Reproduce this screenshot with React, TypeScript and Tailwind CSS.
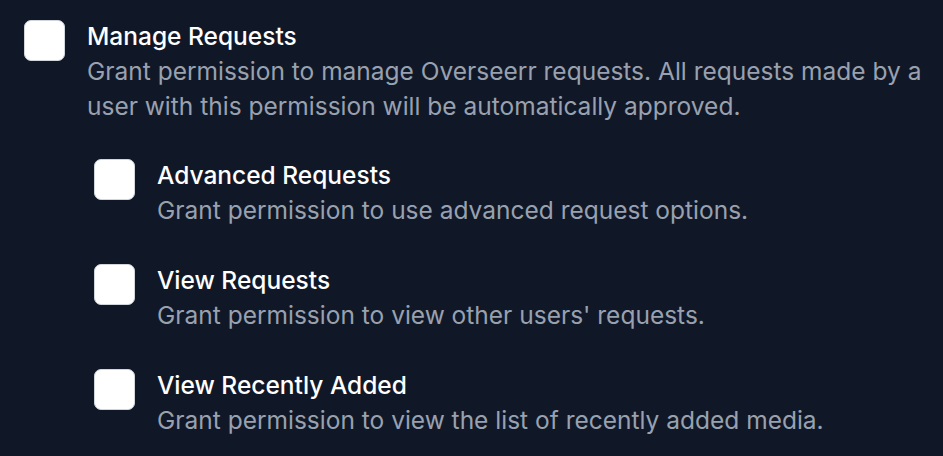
const items = [
  {
    title: "Advanced Requests",
    desc: "Grant permission to use advanced request options.",
  },
  {
    title: "View Requests",
    desc: "Grant permission to view other users' requests.",
  },
  {
    title: "View Recently Added",
    desc: "Grant permission to view the list of recently added media.",
  },
];

const Permission = ({ title, desc }: { title: string; desc: string }) => (
  <div className="flex items-start">
    <span className="mt-[1px] h-[41px] w-[41px] shrink-0 rounded-[7px] border border-gray-300 bg-white" />
    <div className="ml-[22px]">
      <div className="font-medium text-white">{title}</div>
      <div className="text-gray-400">{desc}</div>
    </div>
  </div>
);

const App = () => {
  return (
    <div
      className="h-[456px] w-[943px] overflow-hidden bg-gray-900 pl-6 pr-2 pt-[19px] text-[24.5px] leading-[35px]"
      style={{ fontFamily: "Inter, sans-serif" }}
    >
      <Permission
        title="Manage Requests"
        desc="Grant permission to manage Overseerr requests. All requests made by a user with this permission will be automatically approved."
      />
      <div className="ml-[70px] mt-[34px] flex flex-col gap-[35px]">
        {items.map((item) => (
          <Permission key={item.title} title={item.title} desc={item.desc} />
        ))}
      </div>
    </div>
  );
};

export default App;
